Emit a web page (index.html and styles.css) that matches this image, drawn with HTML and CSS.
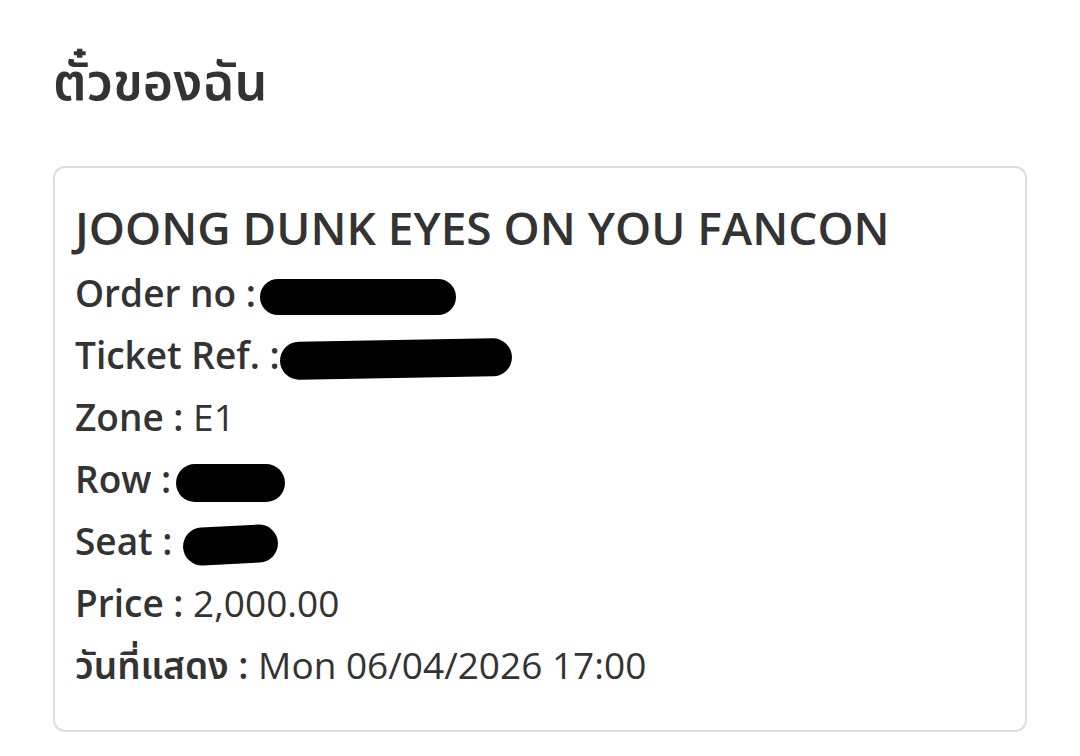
FILE: index.html
```html
<!DOCTYPE html>
<html lang="th">
<head>
<meta charset="utf-8">
<link rel="stylesheet" href="styles.css">
</head>
<body>
<div class="page">
  <h1 class="page-title">ตั๋วของฉัน</h1>
  <div class="card">
    <h2 class="event">JOONG DUNK EYES ON YOU FANCON</h2>
    <div class="row"><span class="label">Order no :</span><span class="redact r-order"></span></div>
    <div class="row"><span class="label">Ticket Ref. :</span><span class="redact r-ref"></span></div>
    <div class="row"><span class="label">Zone :</span> <span class="value">E1</span></div>
    <div class="row"><span class="label">Row :</span><span class="redact r-row"></span></div>
    <div class="row"><span class="label">Seat :</span><span class="redact r-seat"></span></div>
    <div class="row"><span class="label">Price :</span> <span class="value">2,000.00</span></div>
    <div class="row"><span class="label">วันที่แสดง :</span> <span class="value">Mon 06/04/2026 17:00</span></div>
  </div>
</div>
</body>
</html>
```
FILE: styles.css
```css
html, body {
  margin: 0;
  background: #fff;
}
body {
  font-family: "Open Sans", "Noto Sans", "Noto Sans Thai", sans-serif;
  color: #333;
}
.page {
  padding: 42px 53px 0 53px;
}
.page-title {
  margin: 0;
  font-size: 52px;
  font-weight: 600;
  line-height: 76px;
}
.card {
  margin-top: 48px;
  width: 974px;
  height: 566px;
  box-sizing: border-box;
  border: 2px solid #dedede;
  border-radius: 12px;
  padding: 28px 20px 0 20px;
}
.event {
  margin: 0 0 4px 0;
  font-size: 46px;
  font-weight: 600;
  line-height: 62px;
}
.row {
  font-size: 37px;
  line-height: 62px;
  white-space: nowrap;
}
.label {
  font-weight: 600;
}
.value {
  font-weight: 400;
}
.redact {
  display: inline-block;
  vertical-align: middle;
  background: #000;
  border-radius: 20px;
}
.r-order { width: 196px; height: 36px; margin-left: 4px; }
.r-ref { width: 232px; height: 38px; margin-left: 0; transform: rotate(-1deg); }
.r-row { width: 109px; height: 38px; margin-left: 5px; }
.r-seat { width: 95px; height: 38px; margin-left: 10px; transform: rotate(-3deg); }
```
